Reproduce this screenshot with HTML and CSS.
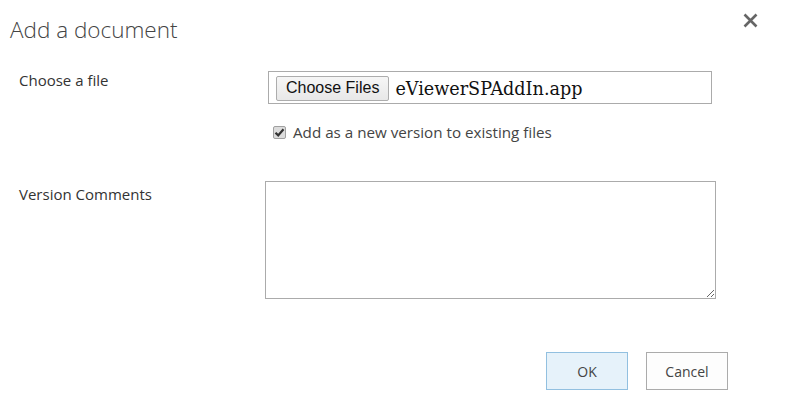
FILE: index.html
```html
<html>
	<head>
		<title>Add a document</title>
		<link rel="stylesheet" href="styles.css">
	</head>
	<body>
		<div class="dialog">
			<div class="header">
				<h1 class="title">Add a document</h1>
				<button class="close" title="Close">
					<svg width="15" height="15" viewBox="0 0 15 15"><path d="M1.5 1.5 L13.5 13.5 M13.5 1.5 L1.5 13.5" stroke="#666" stroke-width="2.6" fill="none"/></svg>
				</button>
			</div>
			<div class="row">
				<label class="label">Choose a file</label>
				<div class="field">
					<div class="fileBox">
						<button class="chooseBtn">Choose Files</button>
						<span class="fileName">eViewerSPAddIn.app</span>
					</div>
					<div class="checkRow">
						<span class="checkbox">
							<svg width="11" height="11" viewBox="0 0 11 11"><path d="M1.5 5.8 L4.2 8.4 L9.5 2.2" stroke="#333" stroke-width="2.2" fill="none"/></svg>
						</span>
						<span>Add as a new version to existing files</span>
					</div>
				</div>
			</div>
			<div class="row comments">
				<label class="label">Version Comments</label>
				<textarea class="commentBox"></textarea>
			</div>
			<div class="actions">
				<button class="btn okBtn">OK</button>
				<button class="btn">Cancel</button>
			</div>
		</div>
	</body>
</html>
```

FILE: styles.css
```css
body {
	margin:0;
	background-color:#fff;
	font-family: "Open Sans", "Noto Sans", sans-serif;
	color:#333;
}

.dialog {
	width:790px;
	height:413px;
	display:flex;
	flex-direction:column;
}

.header {
	display:flex;
	justify-content:space-between;
	align-items:flex-start;
	padding:15px 32px 0 10px;
	height:57px;
	box-sizing:border-box;
}

.title {
	margin:0;
	font-weight:300;
	font-size:22.5px;
	line-height:30px;
	color:#444;
}

.close {
	border:none;
	background:none;
	padding:0;
	margin-top:-2px;
	width:15px;
	height:15px;
	display:flex;
}

.row {
	display:flex;
	padding-left:19px;
}

.label {
	width:246px;
	font-size:15px;
	line-height:18px;
	color:#333;
	padding-top:1px;
}

.field {
	display:flex;
	flex-direction:column;
	padding-left:3px;
	margin-top:14px;
}

.row .label {
	margin-top:13px;
}

.fileBox {
	width:444px;
	height:33px;
	box-sizing:border-box;
	border:1px solid #ababab;
	display:flex;
	align-items:center;
	padding-left:7px;
}

.chooseBtn {
	font-family:"Liberation Sans", Arial, sans-serif;
	font-size:16px;
	height:25px;
	padding:0 9px;
	border:1px solid #adadad;
	border-radius:2px;
	background:linear-gradient(#f6f6f6, #e8e8e8);
	color:#111;
	margin-top:1px;
}

.fileName {
	font-family:"DejaVu Serif", serif;
	font-size:17.6px;
	color:#111;
	margin-left:6px;
	margin-top:2px;
}

.checkRow {
	display:flex;
	align-items:center;
	margin-top:18px;
	margin-left:5px;
	font-size:15.2px;
	color:#444;
}

.checkbox {
	width:13px;
	height:13px;
	box-sizing:border-box;
	border:1px solid #a0a0a0;
	border-radius:2px;
	background:#dcdcdc;
	display:flex;
	align-items:center;
	justify-content:center;
	margin-right:7px;
}

.comments {
	margin-top:39px;
}

.comments .label {
	margin-top:3px;
}

.commentBox {
	width:451px;
	height:118px;
	box-sizing:border-box;
	border:1px solid #ababab;
	margin:0;
	resize:both;
}

.actions {
	display:flex;
	justify-content:flex-end;
	gap:18px;
	padding-right:62px;
	margin-top:53px;
}

.btn {
	width:82px;
	height:38px;
	font-family:"Open Sans", "Noto Sans", sans-serif;
	font-size:14px;
	color:#444;
	background:#fdfdfd;
	border:1px solid #ababab;
}

.okBtn {
	background:#e6f2fa;
	border-color:#92c0e0;
}
```
